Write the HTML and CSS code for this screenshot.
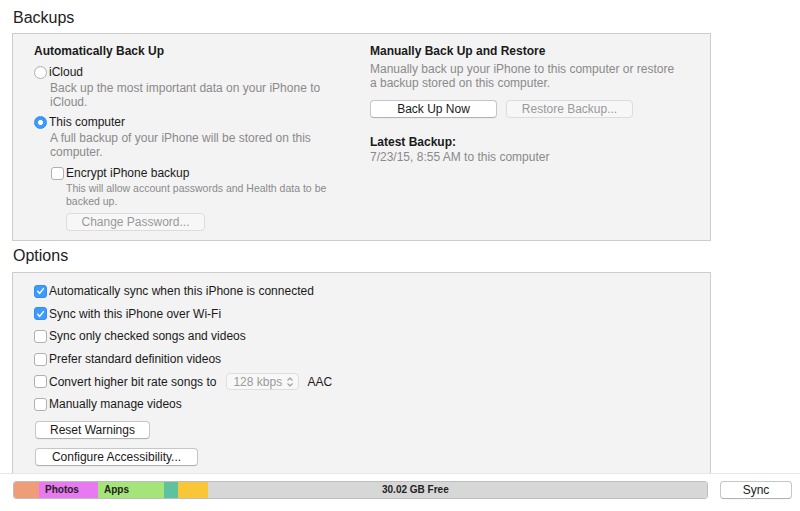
FILE: index.html
```html
<!DOCTYPE html>
<html>
<head>
<meta charset="utf-8">
<link rel="stylesheet" href="styles.css">
</head>
<body>
<div class="page">
  <main class="main">
    <h2 class="heading">Backups</h2>
    <section class="box backups">
      <div class="col left">
        <div class="title">Automatically Back Up</div>
        <div class="opt r1"><span class="radio"></span><span>iCloud</span></div>
        <div class="desc">Back up the most important data on your iPhone to<br>iCloud.</div>
        <div class="opt r2"><span class="radio on"></span><span>This computer</span></div>
        <div class="desc">A full backup of your iPhone will be stored on this<br>computer.</div>
        <div class="opt enc"><span class="check"></span><span>Encrypt iPhone backup</span></div>
        <div class="small">This will allow account passwords and Health data to be<br>backed up.</div>
        <button class="btn disabled pw">Change Password...</button>
      </div>
      <div class="col right">
        <div class="title">Manually Back Up and Restore</div>
        <div class="desc r">Manually back up your iPhone to this computer or restore<br>a backup stored on this computer.</div>
        <div class="btnrow">
          <button class="btn w127">Back Up Now</button>
          <button class="btn disabled w127">Restore Backup...</button>
        </div>
        <div class="title latest">Latest Backup:</div>
        <div class="desc date">7/23/15, 8:55 AM to this computer</div>
      </div>
    </section>
    <h2 class="heading h2">Options</h2>
    <section class="box options">
      <div class="row"><span class="check on"><svg viewBox="0 0 12 12"><path d="M3 6.3 L5.1 8.6 L9.2 3.4" fill="none" stroke="#fff" stroke-width="1.6" stroke-linecap="round" stroke-linejoin="round"/></svg></span><span>Automatically sync when this iPhone is connected</span></div>
      <div class="row"><span class="check on"><svg viewBox="0 0 12 12"><path d="M3 6.3 L5.1 8.6 L9.2 3.4" fill="none" stroke="#fff" stroke-width="1.6" stroke-linecap="round" stroke-linejoin="round"/></svg></span><span>Sync with this iPhone over Wi-Fi</span></div>
      <div class="row"><span class="check"></span><span>Sync only checked songs and videos</span></div>
      <div class="row"><span class="check"></span><span>Prefer standard definition videos</span></div>
      <div class="row"><span class="check"></span><span>Convert higher bit rate songs to</span>
        <span class="popup">128 kbps<svg class="arrows" viewBox="0 0 8 12"><path d="M1.5 4.5 L4 2 L6.5 4.5 M1.5 7.5 L4 10 L6.5 7.5" fill="none" stroke="#9a9a9a" stroke-width="1.1"/></svg></span>
        <span class="aac">AAC</span></div>
      <div class="row"><span class="check"></span><span>Manually manage videos</span></div>
      <button class="btn reset">Reset Warnings</button>
      <button class="btn access">Configure Accessibility...</button>
    </section>
  </main>
  <footer class="footer">
    <div class="capacity">
      <div class="seg audio" style="width:25px"></div>
      <div class="seg photos" style="width:59px">Photos</div>
      <div class="seg apps" style="width:66px">Apps</div>
      <div class="seg other1" style="width:14px"></div>
      <div class="seg other2" style="width:30px"></div>
      <div class="seg free">30.02 GB Free</div>
    </div>
    <button class="btn sync">Sync</button>
  </footer>
</div>
</body>
</html>
```
FILE: styles.css
```css
* { box-sizing: border-box; }
html, body { margin: 0; padding: 0; background: #fff; }
body {
  font-family: "Liberation Sans", Arial, sans-serif;
  font-size: 12px;
  color: #1a1a1a;
  width: 800px;
  height: 511px;
  overflow: hidden;
}
.page { display: flex; flex-direction: column; height: 511px; }
.main { flex: 1; overflow: hidden; padding-left: 12px; }
.heading {
  margin: 8px 0 5px 1px;
  font-size: 16px;
  font-weight: normal;
  line-height: 20px;
  color: #222;
}
.heading.h2 { margin-top: 5px; margin-bottom: 6px; }
.box {
  width: 699px;
  background: #f3f3f3;
  border: 1px solid #cdcdcd;
}
.backups {
  height: 208px;
  display: grid;
  grid-template-columns: 336px 1fr;
  padding: 10px 0 0 21px;
}
.col { display: flex; flex-direction: column; align-items: flex-start; }
.title { font-weight: bold; line-height: 14px; color: #1a1a1a; }
.opt { display: flex; align-items: center; line-height: 14px; }
.r1 { margin-top: 7px; }
.r2 { margin-top: 6px; }
.enc { margin-top: 7px; margin-left: 17px; }
.desc { color: #8a8a8a; line-height: 14px; margin-top: 2px; margin-left: 16px; }
.desc.r { margin-left: 0; margin-top: 4px; }
.small { color: #8a8a8a; font-size: 10.5px; line-height: 13px; margin-top: 2px; margin-left: 32px; }
.radio {
  width: 13px; height: 13px; border-radius: 50%;
  border: 1px solid #b0b0b0; background: #fff;
  margin-right: 2px; flex: none;
  box-shadow: inset 0 1px 1px rgba(0,0,0,.05);
}
.radio.on {
  border-color: #2f8ef5;
  background: radial-gradient(circle, #fff 0 2.2px, #3c9bfc 2.8px);
}
.check {
  width: 13px; height: 13px; border-radius: 3px;
  border: 1px solid #b0b0b0; background: #fff;
  margin-right: 2px; flex: none;
  display: flex; align-items: center; justify-content: center;
}
.check.on { background: #3c9bfc; border-color: #2f8ef5; }
.check svg { width: 12px; height: 12px; }
.btn {
  font-family: "Liberation Sans", Arial, sans-serif;
  font-size: 12px;
  color: #1a1a1a;
  background: #fff;
  border: 1px solid #c6c6c6;
  border-bottom-color: #b2b2b2;
  border-radius: 4px;
  height: 18px;
  padding: 0;
  line-height: 16px;
  box-shadow: 0 0.5px 0 rgba(0,0,0,.06);
}
.btn.disabled { color: #999; background: #f7f7f7; border-color: #dcdcdc; box-shadow: none; }
.pw { width: 139px; margin-left: 32px; margin-top: 5px; }
.btnrow { display: flex; gap: 9px; margin-top: 10px; }
.w127 { width: 127px; }
.latest { margin-top: 17px; }
.date { margin-left: 0; margin-top: 1px; }
.options {
  height: 260px;
  padding: 7px 0 0 21px;
  display: flex; flex-direction: column; align-items: flex-start;
}
.row { display: flex; align-items: center; height: 22.6px; line-height: 14px; }
.popup {
  display: inline-flex; align-items: center; justify-content: space-between;
  width: 73px; height: 17px; margin-left: 10px;
  background: #f8f8f8; border: 1px solid #dedede; border-radius: 4px;
  color: #9a9a9a; padding: 0 4px 0 6px;
}
.arrows { width: 8px; height: 12px; }
.aac { margin-left: 8px; }
.reset { width: 115px; margin-top: 5px; margin-left: 1px; }
.access { width: 163px; margin-top: 9px; margin-left: 1px; }
.footer {
  height: 38px; flex: none;
  border-top: 1px solid #e6e6e6;
  display: flex; align-items: flex-start;
  padding: 7px 0 0 13px;
  background: #fff;
}
.capacity {
  width: 695px; height: 18px;
  display: flex;
  border: 1px solid #bdbdbd;
  border-radius: 3px;
  overflow: hidden;
}
.seg {
  height: 100%; flex: none;
  font-size: 10px; font-weight: bold; color: #222;
  line-height: 16px; padding-left: 6px;
}
.audio { background: #ef9c78; }
.photos { background: #e879f0; }
.apps { background: #a4e478; }
.other1 { background: #5cc29f; }
.other2 { background: #f8c637; }
.free { flex: 1; background: #d7d7d7; padding-left: 174px; }
.sync { width: 72px; margin-left: 12px; }
```
